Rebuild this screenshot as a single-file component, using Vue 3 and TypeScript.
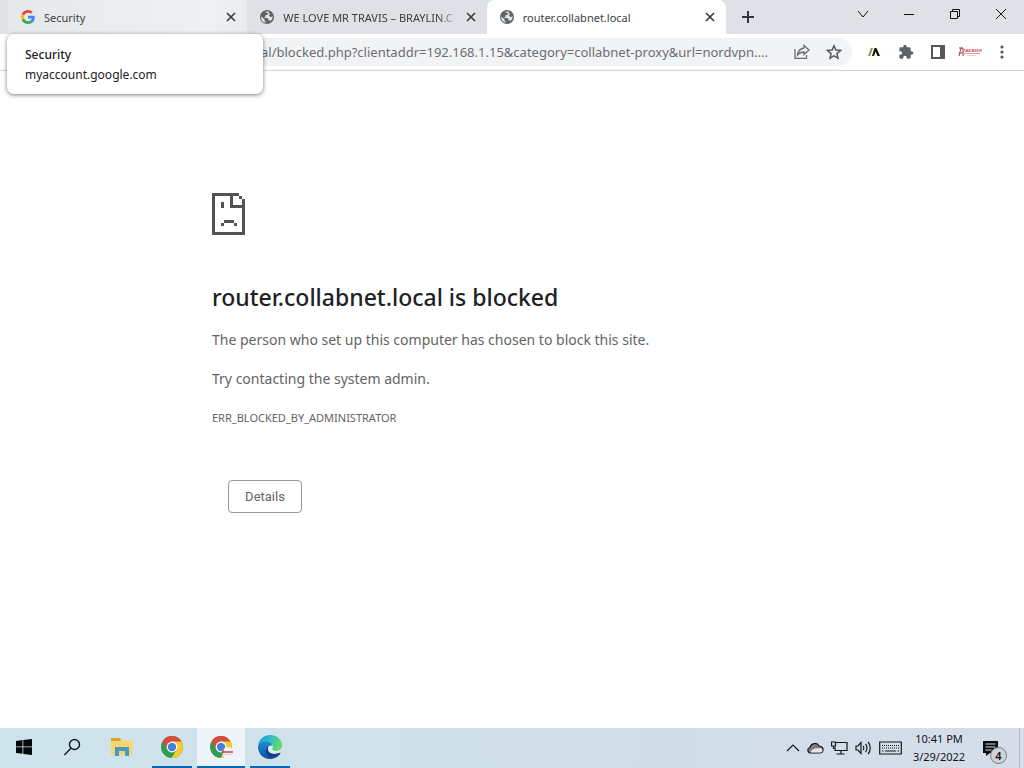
<script setup lang="ts">
import { ref } from 'vue'

interface Tab {
  id: number
  title: string
  icon: 'google' | 'globe'
  state: 'hovered' | 'idle' | 'active'
}

const tabs: Tab[] = [
  { id: 1, title: 'Security', icon: 'google', state: 'hovered' },
  { id: 2, title: 'WE LOVE MR TRAVIS – BRAYLIN.C', icon: 'globe', state: 'idle' },
  { id: 3, title: 'router.collabnet.local', icon: 'globe', state: 'active' },
]

const address = ref('al/blocked.php?clientaddr=192.168.1.15&category=collabnet-proxy&url=nordvpn....')
</script>

<template>
  <div class="desktop">
    <header class="browser">
      <div class="strip">
        <div class="tabs">
          <div v-for="tab in tabs" :key="tab.id" class="tab" :class="tab.state">
            <svg v-if="tab.icon === 'google'" class="fav" viewBox="0 0 48 48">
              <path fill="#ea4335" d="M24 9.5c3.5 0 6.700 1.200 9.200 3.600l6.900-6.900C35.900 2.400 30.500 0 24 0 14.600 0 6.500 5.400 2.600 13.200l8 6.200C12.400 13.700 17.700 9.500 24 9.500z" />
              <path fill="#4285f4" d="M47 24.500c0-1.600-.2-3.100-.4-4.500H24v9h12.900c-.6 3-2.300 5.500-4.800 7.200l7.700 6C44.400 38 47 31.800 47 24.500z" />
              <path fill="#fbbc05" d="M10.500 28.600A14.500 14.500 0 0 1 10.500 19.400l-8-6.200a24 24 0 0 0 0 21.600z" />
              <path fill="#34a853" d="M24 48c6.500 0 11.900-2.100 15.900-5.800l-7.700-6c-2.200 1.500-4.900 2.300-8.200 2.300-6.300 0-11.600-4.200-13.500-9.900l-8 6.200C6.500 42.600 14.600 48 24 48z" />
            </svg>
            <svg v-else class="fav globe" viewBox="0 0 14 14">
              <circle cx="7" cy="7" r="7" />
              <path fill="#e3e6e9" d="M1.300 6.400 4.600 9.600v.9c0 .6.500 1 1 1v1.300A5.800 5.800 0 0 1 1.300 6.400zM5 2.300 6.300 1.500h2.600c0 .9-.5 1.700-1.300 1.900v1c0 .4-.3.700-.7.700H5.600v1.200c0 .4-.3.600-.6.600H4.400v1h3.200c.4 0 .7.300.7.700v1.600h.8c.6 0 1 .3 1.200.8A5.800 5.800 0 0 0 12.700 6L10.500 7.200 9 5.800 10 3.500z" />
            </svg>
            <span class="title">{{ tab.title }}</span>
            <button class="close" :aria-label="`Close ${tab.title}`">
              <svg width="10" height="10" viewBox="0 0 10 10"><path d="M1 1l8 8M9 1l-8 8" stroke="#35383c" stroke-width="1.600" /></svg>
            </button>
          </div>
        </div>
        <button class="new-tab" aria-label="New tab">
          <svg width="14" height="14" viewBox="0 0 14 14"><path d="M7 1v12M1 7h12" stroke="#35383c" stroke-width="2" /></svg>
        </button>
        <div class="window-controls">
          <button aria-label="Search tabs"><svg width="12" height="12" viewBox="0 0 12 12"><path d="M1 3l5 6 5-6" /></svg></button>
          <button aria-label="Minimize"><svg width="12" height="12" viewBox="0 0 12 12"><path d="M1 6.500h10" /></svg></button>
          <button aria-label="Restore"><svg width="12" height="12" viewBox="0 0 12 12"><path d="M1.500 3.500h7v7h-7zM3.500 3V1.500h7v7H9" /></svg></button>
          <button aria-label="Close"><svg width="12" height="12" viewBox="0 0 12 12"><path d="M1 1l10 10M11 1L1 11" /></svg></button>
        </div>
      </div>
      <div class="toolbar">
        <div class="omnibox">
          <input v-model="address" type="text" aria-label="Address" spellcheck="false" />
          <button class="tool" aria-label="Share">
            <svg width="16" height="16" viewBox="0 0 16 16" fill="none" stroke="#6a6e73" stroke-width="1.300"><path d="M1 5v9.300h11.500V11" /><path d="M10 1.500 15 6l-5 4.500V8C7 8 5 9 3.500 11 4 7 6 4.500 10 4z" /></svg>
          </button>
          <button class="tool" aria-label="Bookmark">
            <svg width="16" height="16" viewBox="0 0 16 16" fill="none" stroke="#55595e" stroke-width="1.500"><path d="M8 1.800l1.800 4.300 4.700.4-3.600 3.100 1.100 4.600L8 11.800l-4 2.400 1.100-4.600L1.500 6.500l4.700-.4z" /></svg>
          </button>
        </div>
        <div class="extensions">
          <button class="tool" aria-label="Accessibility extension">
            <svg width="16" height="16" viewBox="0 0 16 16"><rect width="16" height="16" fill="#fffff2" /><path d="M5 4h2L4 12H2z" fill="#87906a" /><path d="M8.500 4h2L14 12h-2.500L9.500 7.500 8 12H6z" fill="#111" /></svg>
          </button>
          <button class="tool" aria-label="Extensions">
            <svg width="16" height="16" viewBox="0 0 24 24" fill="#5f6368"><path d="M20.500 11H19V7a2 2 0 0 0-2-2h-4V3.500a2.500 2.500 0 0 0-5 0V5H4a2 2 0 0 0-2 2v3.800h1.500a2.700 2.700 0 0 1 0 5.400H2V20a2 2 0 0 0 2 2h3.800v-1.500a2.700 2.700 0 0 1 5.400 0V22H17a2 2 0 0 0 2-2v-4h1.500a2.500 2.500 0 0 0 0-5z" /></svg>
          </button>
          <button class="tool" aria-label="Side panel">
            <svg width="16" height="16" viewBox="0 0 16 16"><path d="M2 2h12v12H2z" fill="#fff" stroke="#55585d" stroke-width="2" /><path d="M10 2h4v12h-4z" fill="#55585d" /></svg>
          </button>
          <button class="tool" aria-label="Profile">
            <svg width="24" height="12" viewBox="0 0 24 12"><path d="M1 10 3 2h2v8M1 2h3M1 7h4" fill="none" stroke="#a73a4a" /><text x="5" y="6" font-size="4" font-weight="700" font-family="Liberation Serif, serif" fill="#b8222f">AKERSON</text><path d="M6 7.500h16" stroke="#e09aa0" /><path d="M9 9.500h9" stroke="#f0cfd1" /></svg>
          </button>
          <button class="tool" aria-label="Menu">
            <svg width="16" height="16" viewBox="0 0 16 16" fill="#55585d"><circle cx="8" cy="3" r="1.600" /><circle cx="8" cy="8" r="1.600" /><circle cx="8" cy="13" r="1.600" /></svg>
          </button>
        </div>
      </div>
      <div class="hovercard" role="tooltip">
        <strong>Security</strong>
        <span>myaccount.google.com</span>
      </div>
    </header>

    <main class="page">
      <section class="error">
        <svg class="sad" width="34" height="42" viewBox="0 0 34 42" fill="#535353" shape-rendering="crispEdges">
          <path d="M0 0h27v3H3v36h27V15h3v27H0z" />
          <path d="M18 0h3v12h12v3H18zM27 3h3v3h-3zM30 6h3v9h-3zM9 9h3v6H9zM12 27h10v3H12zM9 30h3v3H9zM22 30h3v3h-3z" />
        </svg>
        <h1>router.collabnet.local is blocked</h1>
        <p>The person who set up this computer has chosen to block this site.</p>
        <p>Try contacting the system admin.</p>
        <p class="code">ERR_BLOCKED_BY_ADMINISTRATOR</p>
        <button class="details">Details</button>
      </section>
    </main>

    <footer class="taskbar">
      <nav class="apps" aria-label="Taskbar">
        <button aria-label="Start">
          <svg width="16" height="16" viewBox="0 0 16 16" fill="#05090d"><path d="M0 2l6.500-.9v6.400H0zM7.300 1 16 0v7.500H7.300zM0 8.300h6.500v6.500L0 13.900zM7.300 8.300H16V16l-8.700-1.100z" /></svg>
        </button>
        <button aria-label="Search">
          <svg width="18" height="18" viewBox="0 0 18 18" fill="none" stroke="#111a20" stroke-width="1.400"><circle cx="11.500" cy="6.500" r="5" /><path d="M8 10.200 1.300 17" /></svg>
        </button>
        <button class="explorer" aria-label="File Explorer">
          <svg width="24" height="20" viewBox="0 0 24 20"><path d="M1 1h9l2 2.500h10.500V18H1z" fill="#f8d66e" /><path d="M1 1h9l1 1.500-1 1.500H1z" fill="#dca32e" /><path d="M5 10h14v9h-4v-5H9v5H5z" fill="#459bc5" /><path d="M9 14h6v4H9z" fill="#f8d66e" /></svg>
        </button>
        <button class="open" aria-label="Chrome">
          <svg width="24" height="24" viewBox="0 0 24 24"><circle cx="12" cy="12" r="11" fill="#2e9e4e" /><path d="M2.500 6.500A11 11 0 0 1 21.600 6.600H12L7.300 14.700z" fill="#dc4a3c" /><path d="M12 6.600h9.600A11 11 0 0 1 11.500 23l5.100-8.300z" fill="#fbc934" /><circle cx="12" cy="12" r="5.400" fill="#fff" /><circle cx="12" cy="12" r="4.200" fill="#4280e0" /></svg>
        </button>
        <button class="open current" aria-label="Chrome, router.collabnet.local">
          <svg width="24" height="24" viewBox="0 0 24 24"><circle cx="12" cy="12" r="11" fill="#2e9e4e" /><path d="M2.500 6.500A11 11 0 0 1 21.600 6.600H12L7.300 14.700z" fill="#dc4a3c" /><path d="M12 6.600h9.600A11 11 0 0 1 11.500 23l5.100-8.300z" fill="#fbc934" /><circle cx="12" cy="12" r="5.400" fill="#fff" /><circle cx="12" cy="12" r="4.200" fill="#4280e0" /><circle cx="19" cy="18" r="6" fill="#f0f4fa" /><path d="M13 17h11" stroke="#c76f7b" stroke-width="2" /><path d="M14 19.500h9" stroke="#edcdd1" /><path d="M13 19.500l1.500-5" stroke="#b73f4c" /></svg>
        </button>
        <button class="open" aria-label="Edge">
          <svg width="24" height="24" viewBox="0 0 24 24">
            <defs>
              <linearGradient id="edge-top" x1="0" y1="0" x2="1" y2=".4"><stop offset="0" stop-color="#1a8fd4" /><stop offset=".5" stop-color="#2fbcc8" /><stop offset="1" stop-color="#62da6a" /></linearGradient>
              <linearGradient id="edge-low" x1="0" y1="0" x2="0" y2="1"><stop offset="0" stop-color="#1b8fd5" /><stop offset="1" stop-color="#134f9e" /></linearGradient>
            </defs>
            <path d="M0 12C0 5 5.500 0 12 0c7 0 12 4.500 12 10 0 4-3 6-6 6s-4.500-1.300-4-2.500c1.500-1.500 1-5-3-5.500C6 7.500 1 9 0 12z" fill="url(#edge-top)" />
            <path d="M0 12c1-4 5-6 9-5.500 4 .3 5.500 3 5 5-1.500-1-4-.5-4 2.500 0 4 5 5.500 9 4.500 1.500-.4 3-1.300 3.500-.5-1.500 3.500-6 6-10.500 6C5 24 0 18.500 0 12z" fill="url(#edge-low)" />
            <path d="M10 11.500C6.500 14 7 20 12.500 22.500c4 .5 8-1.500 10-4.500-.5-.8-2 .1-3.500.5-4 1-9-.5-9-4.500 0-1 .3-1.800 1-2.300z" fill="#153f86" />
            <path d="M11 11c2-1.500 4.500 0 3.500 2-.8 1.800 1 3 4 3 2 0 3.500-.6 4.700-1.700L22 17.500c-4 1.800-10.500 1.800-11.800-2-.6-2-.2-3.500.8-4.500z" fill="#dcebf5" />
          </svg>
        </button>
      </nav>
      <div class="tray">
        <button aria-label="Show hidden icons"><svg width="14" height="8" viewBox="0 0 14 8"><path d="M1 7l6-6 6 6" /></svg></button>
        <button aria-label="OneDrive"><svg width="17" height="12" viewBox="0 0 17 12"><path d="M4 11C0 11 0 6 3 5.500 4 1 10 0 12 4c3 0 4.500 2 4 4.500-.3 1.500-1.500 2.500-3 2.500z" fill="#777e85" /><path d="M3.500 10.400c1-3 4-4.800 11-4 2.200 2 .5 4-1.500 4z" fill="#e5e8ea" stroke="none" /></svg></button>
        <button aria-label="Network"><svg width="17" height="14" viewBox="0 0 17 14"><path d="M5 1.500h11v8H4V6M.500 1h4v4h-4zM2.500 5v3M10 9.500v3.500M5.500 13h8" /></svg></button>
        <button aria-label="Volume"><svg width="17" height="14" viewBox="0 0 17 14"><path d="M1 5h2l3-3.500v11L3 9H1zM8 5c1 1 1 3 0 4M10.500 3c2 2 2 6 0 8M13 1c3 3 3 9 0 12" /></svg></button>
        <button aria-label="Touch keyboard"><svg width="23" height="14" viewBox="0 0 23 14"><path d="M.700 1h21.600v12H.700z" /><path d="M3 4.500h17M3 7h17" stroke-dasharray="1 1" /><path d="M3 10h1.500M6 10h11M18.500 10H20" /></svg></button>
      </div>
      <div class="clock"><time>10:41 PM</time><time>3/29/2022</time></div>
      <button class="notices" aria-label="Notifications">
        <svg width="18" height="17" viewBox="0 0 18 17"><path d="M1 1h15v12H8l-4 3v-3H1z" fill="#080b0f" /><path d="M3.500 4h10M3.500 7h10M3.500 10h6" stroke="#d8dfe8" stroke-width="1" /></svg>
        <span class="badge">4</span>
      </button>
    </footer>
  </div>
</template>

<style>
body {
  margin: 0;
}
</style>

<style scoped>
.desktop {
  display: flex;
  flex-direction: column;
  min-height: 100vh;
  background: #fff;
  color: #3c4043;
  font-family: "Noto Sans", sans-serif;
  font-size: 11px;
}
button {
  display: flex;
  align-items: center;
  justify-content: center;
  padding: 0;
  border: 0;
  background: none;
  color: inherit;
  font: inherit;
}
svg {
  display: block;
  flex: none;
}
.browser {
  position: relative;
  border-bottom: 1px solid #d3d4d6;
}
.strip {
  display: flex;
  height: 34px;
  padding-left: 8px;
  background: #dee1e6;
}
.tabs {
  display: flex;
  flex: 0 1 718px;
  min-width: 0;
}
.tab {
  display: flex;
  flex: 1 1 0;
  align-items: center;
  min-width: 0;
  padding: 0 10px 0 13px;
}
.hovered {
  background: linear-gradient(90deg, #e5e8eb, #eff0f2 85%, #e9ebed);
}
.active {
  border-radius: 8px 8px 0 0;
  background: #fff;
}
.fav {
  width: 14px;
  height: 14px;
}
.globe {
  fill: #5f6368;
}
.title {
  flex: 1;
  min-width: 0;
  margin: 0 6px 0 9px;
  overflow: hidden;
  white-space: nowrap;
}
.idle .title {
  mask-image: linear-gradient(90deg, #000 88%, transparent);
}
.close {
  width: 12px;
  height: 16px;
}
.new-tab {
  width: 28px;
  margin-left: 8px;
}
.window-controls {
  display: flex;
  height: 28px;
  margin-left: auto;
}
.window-controls button {
  width: 46px;
}
.window-controls svg {
  fill: none;
  stroke: #111;
  stroke-width: 1;
}
.toolbar {
  display: flex;
  align-items: center;
  height: 36px;
}
.omnibox {
  display: flex;
  flex: 1;
  align-items: center;
  min-width: 0;
  height: 28px;
  margin-left: 112px;
  padding-right: 2px;
  border-radius: 14px;
  background: #f1f3f4;
}
input {
  flex: 1;
  min-width: 0;
  padding: 0 0 0 149px;
  border: 0;
  outline: 0;
  background: none;
  color: #6a6e73;
  font: inherit;
  font-size: 13px;
}
.tool {
  width: 32px;
  height: 28px;
}
.extensions {
  display: flex;
  margin: 0 6px;
}
.hovercard {
  position: absolute;
  top: 34px;
  left: 7px;
  display: flex;
  flex-direction: column;
  box-sizing: border-box;
  width: 256px;
  padding: 11px 18px 9px;
  border-radius: 7px;
  background: #fff;
  box-shadow: 0 1px 4px rgba(0, 0, 0, 0.5);
  color: #202124;
  font-size: 12px;
  line-height: 20px;
}
.hovercard strong {
  font-weight: 500;
}
.page {
  flex: 1;
  padding: 0 24px;
}
.error {
  max-width: 600px;
  margin: 0 auto;
  padding-top: 122px;
  color: #646464;
  font-size: 14px;
}
h1 {
  margin: 47px 0 16px;
  color: #202124;
  font-size: 23px;
  font-weight: 500;
  line-height: 30px;
}
p {
  margin: 0 0 15px;
  line-height: 24px;
}
.code {
  font-size: 11px;
}
.details {
  box-sizing: border-box;
  width: 74px;
  height: 33px;
  margin: 50px 16px 24px;
  border: 1px solid #96989b;
  border-radius: 4px;
  font-family: Roboto, sans-serif;
  font-size: 13px;
}
.taskbar {
  display: flex;
  height: 40px;
  background: linear-gradient(90deg, #cee3ec, #cfe2eb 30%, #d0deea 60%, #d5dde8);
  color: #10151b;
}
.apps {
  display: flex;
}
.apps button {
  width: 48px;
  border-bottom: 2px solid transparent;
}
.apps .explorer {
  margin: 0 1px 0 2px;
}
.apps .open {
  width: 40px;
  margin-left: 5px;
  border-bottom-color: #0068b8;
}
.apps .current {
  width: 48px;
  background: #edf3f9;
}
.tray {
  display: flex;
  align-items: center;
  gap: 7px;
  margin-left: auto;
}
.tray svg {
  fill: none;
  stroke: #11171d;
  stroke-width: 1.200;
}
.clock {
  display: flex;
  flex-direction: column;
  align-items: center;
  justify-content: center;
  width: 74px;
  line-height: 18px;
}
.notices {
  position: relative;
  box-sizing: border-box;
  width: 44px;
  margin-right: 4px;
  padding-right: 14px;
  border-right: 1px solid #b4bbc5;
}
.badge {
  position: absolute;
  right: 12px;
  bottom: 4px;
  box-sizing: border-box;
  width: 17px;
  height: 17px;
  border: 1px solid #777c83;
  border-radius: 50%;
  background: #cfd3d9;
  font-weight: 600;
  line-height: 15px;
}
</style>
